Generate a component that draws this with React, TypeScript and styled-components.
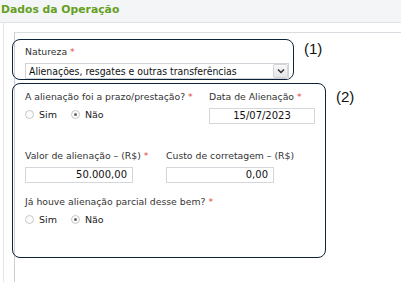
import React from "react";
import styled, { createGlobalStyle } from "styled-components";

const Global = createGlobalStyle`
  html, body { margin: 0; padding: 0; background: #fff; }
  body { font-family: "DejaVu Sans", Verdana, sans-serif; }
  * { box-sizing: border-box; }
`;

const Page = styled.div`
  width: 401px;
  height: 282px;
  overflow: hidden;
  background: #fff;
  display: flex;
  flex-direction: column;
`;

const Header = styled.div`
  height: 23px;
  flex: none;
  background: #f4f5f7;
  border-bottom: 1px solid #dfe3e8;
  padding: 3px 0 0 1px;
`;

const Title = styled.h1`
  margin: 0;
  font-family: "DejaVu Sans", Verdana, sans-serif;
  font-size: 10.8px;
  font-weight: bold;
  color: #64a023;
  letter-spacing: 0;
`;

const Outer = styled.div`
  flex: 1;
  margin-left: 3px;
  border-left: 1px solid #e3e5e8;
  padding: 9px 0 0 10px;
  display: flex;
`;

const Fieldset = styled.div`
  flex: 1;
  border-top: 1px solid #d9dde2;
  border-left: 1px solid #c9ced4;
  padding-top: 6px;
  display: flex;
  flex-direction: column;
  gap: 3px;
`;

const AnnotatedRow = styled.div`
  display: flex;
  align-items: flex-start;
  margin-left: -3px;
`;

const Callout = styled.div<{ $w: number; $h: number }>`
  width: ${(p) => p.$w}px;
  height: ${(p) => p.$h}px;
  border: 1.5px solid #0e2238;
  border-radius: 8px;
  display: flex;
  flex-direction: column;
`;

const CalloutTag = styled.span<{ $ml: number; $mt: number }>`
  margin-left: ${(p) => p.$ml}px;
  margin-top: ${(p) => p.$mt}px;
  font-family: "Liberation Sans", Arial, sans-serif;
  font-size: 15px;
  color: #111;
`;

const Label = styled.div`
  font-size: 9.3px;
  color: #333;
  line-height: 11px;
  white-space: nowrap;
`;

const Req = styled.span`
  color: #e8423f;
  margin-left: 3px;
`;

const Select = styled.div`
  width: 264px;
  height: 16px;
  border: 1px solid #cfd3d8;
  display: flex;
  align-items: center;
  padding-left: 3px;
  background: #fff;
`;

const SelectText = styled.span`
  flex: 1;
  font-family: "DejaVu Sans", Verdana, sans-serif;
  font-stretch: condensed;
  font-size: 10.4px;
  color: #111;
  white-space: nowrap;
  overflow: hidden;
`;

const ArrowBtn = styled.div`
  width: 15px;
  height: 14px;
  border: 1px solid #d2d5d9;
  border-radius: 2px;
  background: linear-gradient(#f7f7f7, #e6e6e6);
  display: flex;
  align-items: center;
  justify-content: center;
`;

const Box1Body = styled.div`
  padding: 6px 0 0 12px;
  display: flex;
  flex-direction: column;
  gap: 6px;
`;

const Box2Body = styled.div`
  padding: 7px 0 0 12px;
  display: flex;
  flex-direction: column;
`;

const Row = styled.div<{ $mt?: number }>`
  display: flex;
  margin-top: ${(p) => p.$mt ?? 0}px;
`;

const Col = styled.div<{ $w?: number; $gap?: number }>`
  ${(p) => (p.$w ? `width: ${p.$w}px;` : "")}
  flex: none;
  display: flex;
  flex-direction: column;
  gap: ${(p) => p.$gap ?? 6}px;
`;

const Input = styled.div<{ $w: number; $align: string }>`
  width: ${(p) => p.$w}px;
  height: 16px;
  border: 1px solid #d3d6da;
  font-size: 10px;
  color: #111;
  line-height: 14px;
  padding: 0 5px;
  text-align: ${(p) => p.$align};
  white-space: nowrap;
`;

const Radios = styled.div`
  display: flex;
  align-items: center;
  gap: 14px;
  height: 12px;
`;

const RadioItem = styled.label`
  display: flex;
  align-items: center;
  gap: 5px;
  font-size: 9.5px;
  color: #222;
`;

const Circle = styled.span<{ $on?: boolean }>`
  width: 9px;
  height: 9px;
  border-radius: 50%;
  border: 1px solid #c4c8cc;
  background: #fbfbfb;
  display: flex;
  align-items: center;
  justify-content: center;
  &::after {
    content: "";
    width: 3px;
    height: 3px;
    border-radius: 50%;
    background: ${(p) => (p.$on ? "#666" : "transparent")};
  }
`;

const Chevron = () => (
  <svg width="8" height="6" viewBox="0 0 8 6">
    <path d="M1 1.5 L4 4.5 L7 1.5" fill="none" stroke="#333" strokeWidth="1.5" />
  </svg>
);

const RadioGroup = () => (
  <Radios>
    <RadioItem>
      <Circle />
      Sim
    </RadioItem>
    <RadioItem>
      <Circle $on />
      Não
    </RadioItem>
  </Radios>
);

export default function App() {
  return (
    <Page>
      <Global />
      <Header>
        <Title>Dados da Operação</Title>
      </Header>
      <Outer>
        <Fieldset>
          <AnnotatedRow>
            <Callout $w={282} $h={41}>
              <Box1Body>
                <Label>
                  Natureza<Req>*</Req>
                </Label>
                <Select>
                  <SelectText>Alienações, resgates e outras transferências</SelectText>
                  <ArrowBtn>
                    <Chevron />
                  </ArrowBtn>
                </Select>
              </Box1Body>
            </Callout>
            <CalloutTag $ml={10} $mt={1}>(1)</CalloutTag>
          </AnnotatedRow>
          <AnnotatedRow>
            <Callout $w={314} $h={175}>
              <Box2Body>
                <Row>
                  <Col $w={184} $gap={6}>
                    <Label>
                      A alienação foi a prazo/prestação?<Req>*</Req>
                    </Label>
                    <RadioGroup />
                  </Col>
                  <Col $gap={6}>
                    <Label>
                      Data de Alienação<Req>*</Req>
                    </Label>
                    <Input $w={106} $align="center">15/07/2023</Input>
                  </Col>
                </Row>
                <Row $mt={26}>
                  <Col $w={141} $gap={6}>
                    <Label>
                      Valor de alienação – (R$)<Req>*</Req>
                    </Label>
                    <Input $w={108} $align="right">50.000,00</Input>
                  </Col>
                  <Col $gap={6}>
                    <Label>Custo de corretagem – (R$)</Label>
                    <Input $w={108} $align="right">0,00</Input>
                  </Col>
                </Row>
                <Row $mt={13}>
                  <Col $gap={6}>
                    <Label>
                      Já houve alienação parcial desse bem?<Req>*</Req>
                    </Label>
                    <RadioGroup />
                  </Col>
                </Row>
              </Box2Body>
            </Callout>
            <CalloutTag $ml={10} $mt={5}>(2)</CalloutTag>
          </AnnotatedRow>
        </Fieldset>
      </Outer>
    </Page>
  );
}
